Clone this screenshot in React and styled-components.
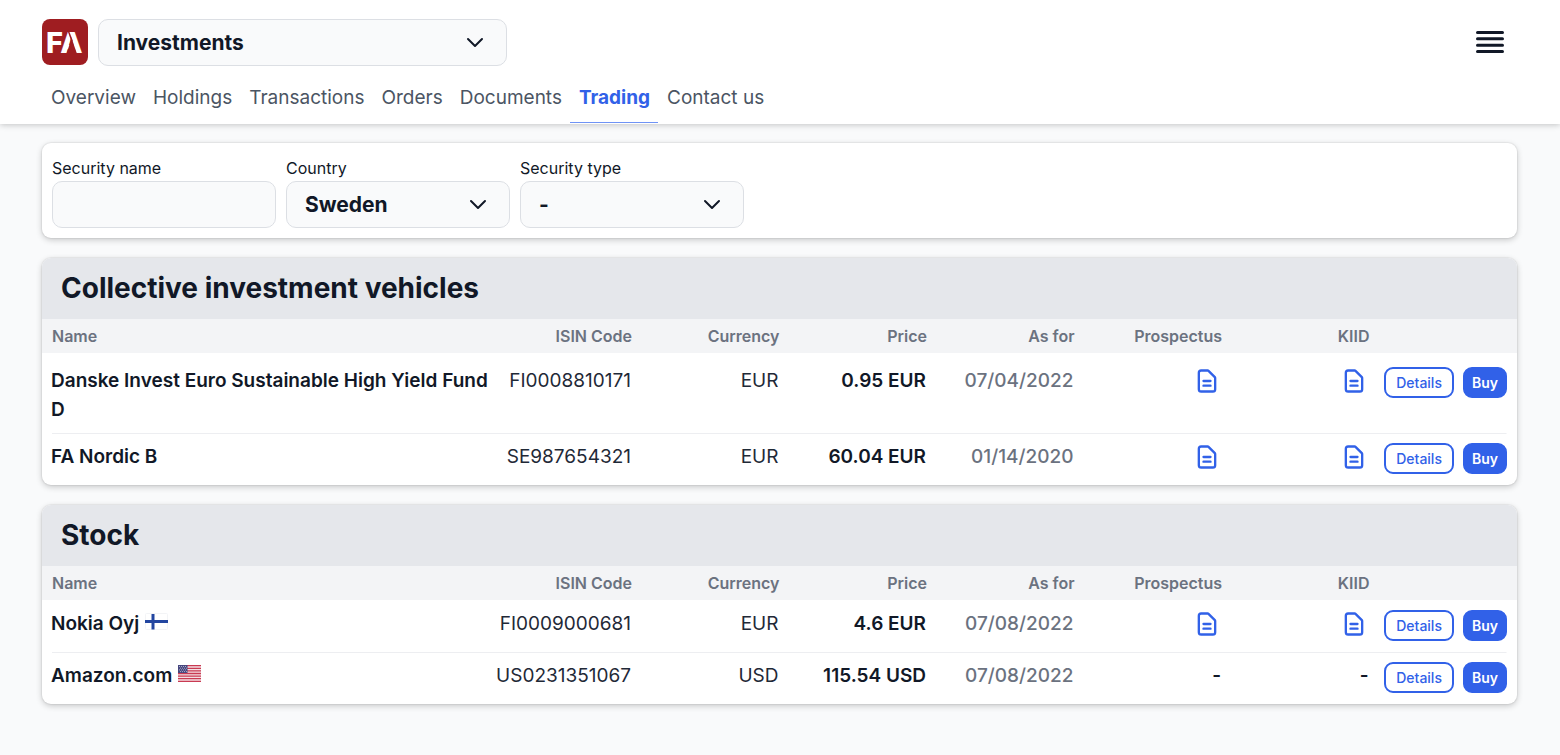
import React from "react";
import styled, { createGlobalStyle } from "styled-components";

const GlobalStyle = createGlobalStyle`
  *, *::before, *::after { box-sizing: border-box; }
  body {
    margin: 0;
    background: #f9fafb;
    color: #111827;
    font-family: Inter, "Liberation Sans", sans-serif;
    font-size: 19px;
    line-height: 29px;
  }
`;

const Header = styled.header`
  position: relative;
  background: #fff;
  padding: 19px 42px 1px;
  box-shadow: 0 1px 6px rgba(0, 0, 0, 0.22);
`;

const HeaderRow = styled.div`
  display: flex;
  align-items: flex-start;
  gap: 10px;
`;

const Logo = styled.svg`
  width: 46px;
  height: 46px;
  flex: none;
`;

const SelectBox = styled.div`
  display: grid;
  align-items: center;
  width: ${(p) => p.$width}px;

  > * { grid-area: 1 / 1; }
`;

const Chevron = styled.svg`
  justify-self: end;
  width: 24px;
  height: 24px;
  margin: 0 20px 1px 0;
  pointer-events: none;
  fill: none;
  stroke: #111827;
  stroke-width: 2;
  stroke-linecap: round;
  stroke-linejoin: round;
`;

const fieldStyle = `
  width: 100%;
  height: 47px;
  border: 1px solid #dcdfe4;
  border-radius: 10px;
  background: #f9fafb;
  color: #111827;
  font-family: inherit;
  font-size: 21px;
  font-weight: 700;
  padding: 0 18px 1px;
`;

const Select = styled.select`
  ${fieldStyle}
  appearance: none;
`;

const TextInput = styled.input`
  ${fieldStyle}
`;

const MenuButton = styled.button`
  display: flex;
  align-items: center;
  height: 46px;
  margin-left: auto;
  margin-right: 14px;
  padding: 0;
  border: 0;
  background: none;
`;

const Tabs = styled.nav`
  display: flex;
  margin-top: 17px;
`;

const Tab = styled.a`
  padding: 0 8px 10px 9px;
  border-bottom: 1px solid ${(p) => (p.$active ? "#6f93f5" : "transparent")};
  color: ${(p) => (p.$active ? "#3161e8" : "#4b5563")};
  font-weight: ${(p) => (p.$active ? 700 : 400)};
  text-decoration: none;
`;

const Main = styled.main`
  display: flex;
  flex-direction: column;
  gap: 20px;
  padding: 19px 43px 48px 42px;
`;

const Card = styled.section`
  overflow: hidden;
  border-radius: 9px;
  background: #fff;
  box-shadow: 0 0 1px 1px rgba(0, 0, 0, 0.05), 0 2px 6px rgba(0, 0, 0, 0.2);
`;

const Filters = styled.form`
  display: flex;
  gap: 10px;
  padding: 13px 10px 10px;
`;

const Field = styled.div`
  display: flex;
  flex-direction: column;
  gap: 1px;
  width: 224px;
`;

const Label = styled.label`
  font-size: 16px;
  line-height: 24px;
`;

const Title = styled.h2`
  margin: 0;
  padding: 12px 19px 13px;
  background: #e5e7eb;
  font-size: 28px;
  line-height: 36px;
  font-weight: 700;
`;

const Table = styled.table`
  width: 100%;
  table-layout: fixed;
  border-collapse: collapse;
`;

const HeadCell = styled.th`
  width: ${(p) => p.$width};
  height: 34px;
  padding: 0 0 0 ${(p) => (p.$left ? 10 : 0)}px;
  background: #f3f4f6;
  color: #6b7280;
  font-size: 16px;
  line-height: 24px;
  font-weight: 600;
  text-align: ${(p) => (p.$left ? "left" : "right")};
`;

const Cell = styled.td`
  padding: 9px 1px 9px 0;
  vertical-align: top;
  text-align: right;
  color: ${(p) => (p.$muted ? "#6b7280" : p.$strong ? "#111827" : "#1f2937")};
  font-weight: ${(p) => (p.$strong ? 600 : p.$muted ? 500 : 400)};
`;

const NameCell = styled(Cell)`
  padding-left: 9px;
  padding-right: 0;
  text-align: left;
`;

const ActionCell = styled.td`
  padding: 10px 10px 11px 0;
  vertical-align: top;
`;

const Row = styled.tr`
  & + & {
    background: linear-gradient(#edeef1, #edeef1) center top / calc(100% - 20px) 1px no-repeat;
  }

  ${Cell} { padding-top: ${(p) => (p.$roomy ? 13 : 9)}px; }
  ${ActionCell} { padding-top: ${(p) => (p.$roomy ? 14 : 10)}px; }
`;

const Actions = styled.div`
  display: flex;
  justify-content: flex-end;
  gap: 9px;
`;

const Button = styled.button`
  height: 31px;
  padding: 0 ${(p) => (p.$primary ? 7 : 10)}px 1px;
  border: 2px solid #3161e8;
  border-radius: 9px;
  background: ${(p) => (p.$primary ? "#3161e8" : "#fff")};
  color: ${(p) => (p.$primary ? "#fff" : "#3161e8")};
  font-family: inherit;
  font-size: 14px;
  font-weight: ${(p) => (p.$primary ? 600 : 500)};
`;

const DocLink = styled.a`
  display: inline-flex;
  padding-top: 1px;
  vertical-align: top;
`;

const DocSvg = styled.svg`
  width: 28px;
  height: 28px;
  fill: none;
  stroke: #3161e8;
  stroke-width: 2;
  stroke-linecap: round;
  stroke-linejoin: round;
`;

const Flag = styled.svg`
  width: 23px;
  height: 17px;
  margin-left: 6px;
`;

function Dropdown({ id, options, width, label }) {
  return (
    <SelectBox $width={width}>
      <Select id={id} aria-label={label}>
        {options.map((o) => <option key={o}>{o}</option>)}
      </Select>
      <Chevron viewBox="0 0 24 24" aria-hidden="true"><path d="M5 9l7 7 7-7" /></Chevron>
    </SelectBox>
  );
}

function FinlandFlag() {
  return (
    <Flag viewBox="0 0 23 17" role="img" aria-label="Finland">
      <rect x=".5" y=".5" width="22" height="16" rx="1" fill="#fff" stroke="#f3f4f6" />
      <path d="M0 8.5h23M8 1v15.5" stroke="#2346a0" strokeWidth="3" />
    </Flag>
  );
}

function UsaFlag() {
  return (
    <Flag viewBox="0 0 23 17" role="img" aria-label="United States">
      <rect width="23" height="17" fill="#f3dfe3" />
      <path d="M0 .7h23M0 3.3h23M0 5.9h23M0 8.5h23M0 11.1h23M0 13.7h23M0 16.3h23" stroke="#c93a52" strokeWidth="1.3" />
      <rect width="9.5" height="8" fill="#46477f" />
      <path d="M1 1.5h8M2 3.2h7M1 4.9h8M2 6.6h7" stroke="#c3c4d8" strokeWidth=".8" strokeDasharray="1 1" />
    </Flag>
  );
}

function Document({ present, label }) {
  if (!present) return "-";
  return (
    <DocLink href="#" aria-label={label}>
      <DocSvg viewBox="0 0 24 24" aria-hidden="true">
        <path d="M9 12h6m-6 4h6m2 5H7a2 2 0 01-2-2V5a2 2 0 012-2h5.586a1 1 0 01.707.293l5.414 5.414a1 1 0 01.293.707V19a2 2 0 01-2 2z" />
      </DocSvg>
    </DocLink>
  );
}

const columns = [
  { label: "Name", width: "30.7%" },
  { label: "ISIN Code", width: "9.3%" },
  { label: "Currency", width: "10%" },
  { label: "Price", width: "10%" },
  { label: "As for", width: "10%" },
  { label: "Prospectus", width: "10%" },
  { label: "KIID", width: "10%" },
];

function SecurityGroup({ title, rows }) {
  return (
    <Card>
      <Title>{title}</Title>
      <Table>
        <thead>
          <tr>
            {columns.map((c, i) => (
              <HeadCell key={c.label} scope="col" $left={i === 0} $width={c.width}>{c.label}</HeadCell>
            ))}
            <HeadCell as="td" $width="10%" />
          </tr>
        </thead>
        <tbody>
          {rows.map((r) => (
            <Row key={r.isin} $roomy={r.roomy}>
              <NameCell $strong>{r.name}{r.flag}</NameCell>
              <Cell>{r.isin}</Cell>
              <Cell>{r.currency}</Cell>
              <Cell $strong>{r.price}</Cell>
              <Cell $muted>{r.date}</Cell>
              <Cell $strong><Document present={r.docs} label="Prospectus" /></Cell>
              <Cell $strong><Document present={r.docs} label="KIID" /></Cell>
              <ActionCell>
                <Actions>
                  <Button type="button">Details</Button>
                  <Button type="button" $primary>Buy</Button>
                </Actions>
              </ActionCell>
            </Row>
          ))}
        </tbody>
      </Table>
    </Card>
  );
}

const funds = [
  { name: "Danske Invest Euro Sustainable High Yield Fund D", isin: "FI0008810171", currency: "EUR", price: "0.95 EUR", date: "07/04/2022", docs: true, roomy: true },
  { name: "FA Nordic B", isin: "SE987654321", currency: "EUR", price: "60.04 EUR", date: "01/14/2020", docs: true },
];

const stocks = [
  { name: "Nokia Oyj", flag: <FinlandFlag />, isin: "FI0009000681", currency: "EUR", price: "4.6 EUR", date: "07/08/2022", docs: true },
  { name: "Amazon.com", flag: <UsaFlag />, isin: "US0231351067", currency: "USD", price: "115.54 USD", date: "07/08/2022", docs: false },
];

const tabs = ["Overview", "Holdings", "Transactions", "Orders", "Documents", "Trading", "Contact us"];

export default function App() {
  return (
    <>
      <GlobalStyle />
      <Header>
        <HeaderRow>
          <Logo viewBox="0 0 46 46" role="img" aria-label="FA">
            <rect width="46" height="46" rx="8" fill="#9f1d21" />
            <text x="4" y="34" fill="#fff" fontFamily="Inter, sans-serif" fontSize="29" fontWeight="800">FA</text>
            {/* wedge and slit that open up the A of the mark */}
            <path d="M29.5 19L35 35H24.5Z" fill="#9f1d21" />
            <path d="M26 11L30 22" stroke="#9f1d21" strokeWidth="1.5" />
          </Logo>
          <Dropdown label="Portfolio" width={409} options={["Investments"]} />
          <MenuButton type="button" aria-label="Menu">
            <svg width="28" height="22" viewBox="0 0 28 22" aria-hidden="true">
              <path d="M1.5 1.5h25M1.5 7.8h25M1.5 14.2h25M1.5 20.5h25" stroke="#111827" strokeWidth="3" strokeLinecap="round" />
            </svg>
          </MenuButton>
        </HeaderRow>
        <Tabs>
          {tabs.map((t) => (
            <Tab key={t} href="#" $active={t === "Trading"}>{t}</Tab>
          ))}
        </Tabs>
      </Header>
      <Main>
        <Card>
          <Filters>
            <Field>
              <Label htmlFor="name">Security name</Label>
              <TextInput id="name" type="text" />
            </Field>
            <Field>
              <Label htmlFor="country">Country</Label>
              <Dropdown id="country" width={224} options={["Sweden"]} />
            </Field>
            <Field>
              <Label htmlFor="type">Security type</Label>
              <Dropdown id="type" width={224} options={["-"]} />
            </Field>
          </Filters>
        </Card>
        <SecurityGroup title="Collective investment vehicles" rows={funds} />
        <SecurityGroup title="Stock" rows={stocks} />
      </Main>
    </>
  );
}
